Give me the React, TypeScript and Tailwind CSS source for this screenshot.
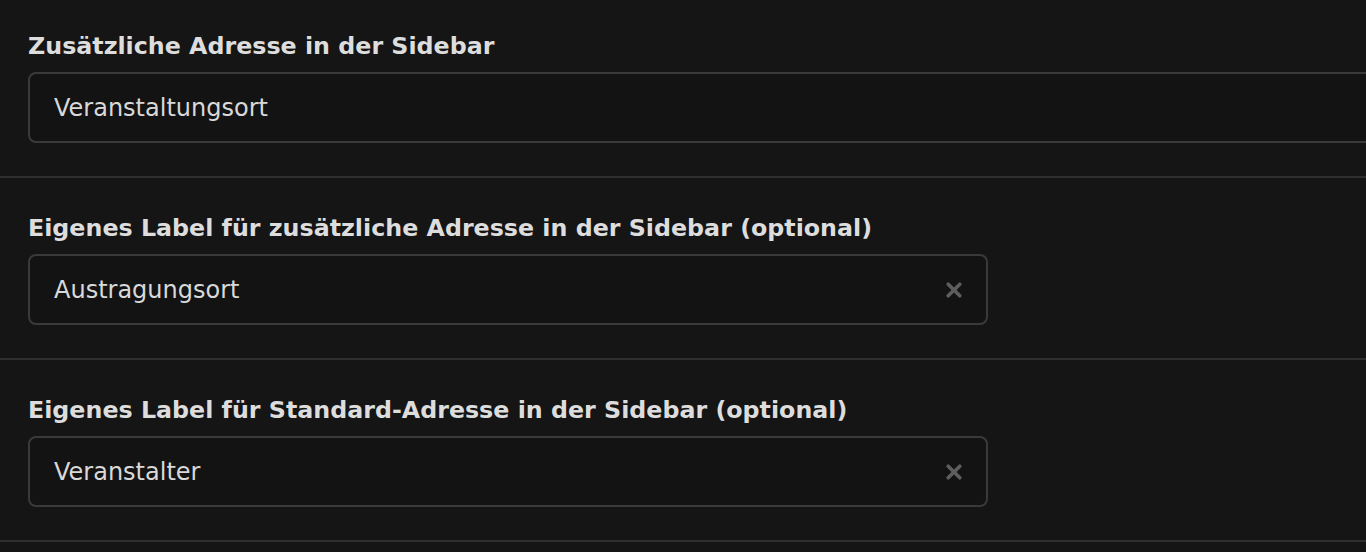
import { useState } from 'react';

type Field = {
  id: string;
  label: string;
  value: string;
  clearable: boolean;
};

const fields: Field[] = [
  { id: 'extra-address', label: 'Zusätzliche Adresse in der Sidebar', value: 'Veranstaltungsort', clearable: false },
  { id: 'extra-label', label: 'Eigenes Label für zusätzliche Adresse in der Sidebar (optional)', value: 'Austragungsort', clearable: true },
  { id: 'default-label', label: 'Eigenes Label für Standard-Adresse in der Sidebar (optional)', value: 'Veranstalter', clearable: true },
];

function ClearIcon() {
  return (
    <svg width="18" height="18" viewBox="0 0 18 18" fill="none">
      <path d="M3.2 3.2l11.6 11.6M14.8 3.2L3.2 14.8" stroke="#5e5e5e" strokeWidth="3.6" strokeLinecap="round" />
    </svg>
  );
}

function SettingRow({ field, first }: { field: Field; first: boolean }) {
  const [value, setValue] = useState(field.value);

  return (
    <section className={`border-b-2 border-[#2f2f2f] pb-[33px] pl-[28px] ${first ? 'pt-[31px]' : 'pt-[35px]'}`}>
      <label
        htmlFor={field.id}
        className="block text-[23.75px] leading-[30px] font-bold text-[#dddddd] mb-[11px] whitespace-nowrap"
      >
        {field.label}
      </label>
      {field.clearable ? (
        <div className="relative w-[960px] h-[71px]">
          <input
            id={field.id}
            value={value}
            onChange={e => setValue(e.target.value)}
            className="w-full h-full bg-[#131313] border-2 border-[#3a3a3a] rounded-[8px] pl-[24px] pr-[60px] text-[24px] text-[#d9d9d9] outline-none"
          />
          {value && (
            <button
              onClick={() => setValue('')}
              className="absolute right-[25px] top-1/2 -translate-y-1/2 flex items-center justify-center cursor-pointer"
            >
              <ClearIcon />
            </button>
          )}
        </div>
      ) : (
        <input
          id={field.id}
          value={value}
          onChange={e => setValue(e.target.value)}
          className="block w-[1400px] h-[71px] bg-[#131313] border-2 border-[#3a3a3a] rounded-[8px] pl-[24px] text-[24px] text-[#d9d9d9] outline-none"
        />
      )}
    </section>
  );
}

export default function App() {
  return (
    <main
      className="w-full min-h-[552px] bg-[#151515] overflow-hidden"
      style={{ fontFamily: '"DejaVu Sans", Verdana, sans-serif' }}
    >
      {fields.map((f, i) => (
        <SettingRow key={f.id} field={f} first={i === 0} />
      ))}
    </main>
  );
}
